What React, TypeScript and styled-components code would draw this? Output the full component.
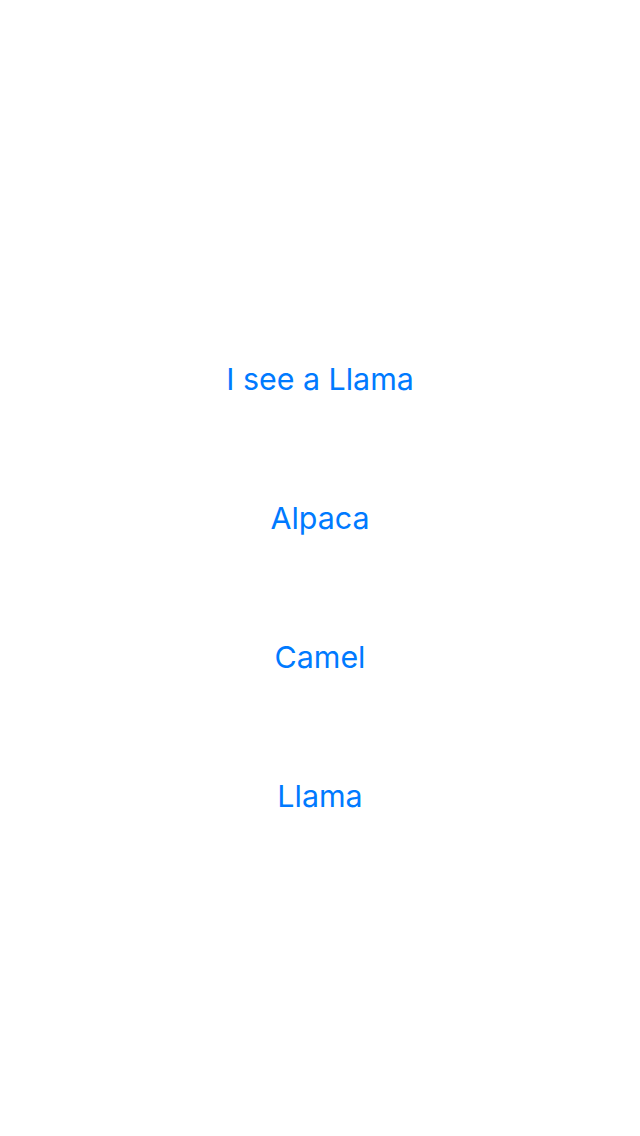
import React from 'react'
import styled, { createGlobalStyle } from 'styled-components'

const GlobalStyle = createGlobalStyle`
  html, body {
    margin: 0;
    padding: 0;
    background: #ffffff;
  }
`

const Screen = styled.div`
  width: 640px;
  height: 1136px;
  display: flex;
  flex-direction: column;
  align-items: center;
  padding-top: 309px;
  box-sizing: border-box;
  background: #ffffff;
`

const Choice = styled.button`
  height: 139px;
  width: 100%;
  display: flex;
  align-items: center;
  justify-content: center;
  border: none;
  background: transparent;
  padding: 0;
  color: #007aff;
  font-family: Inter, 'Noto Sans', sans-serif;
  font-size: 30.4px;
  font-weight: 400;
  cursor: pointer;
`

const choices = ['I see a Llama', 'Alpaca', 'Camel', 'Llama']

export default function App() {
  return (
    <>
      <GlobalStyle />
      <Screen>
        {choices.map((label) => (
          <Choice key={label}>{label}</Choice>
        ))}
      </Screen>
    </>
  )
}
